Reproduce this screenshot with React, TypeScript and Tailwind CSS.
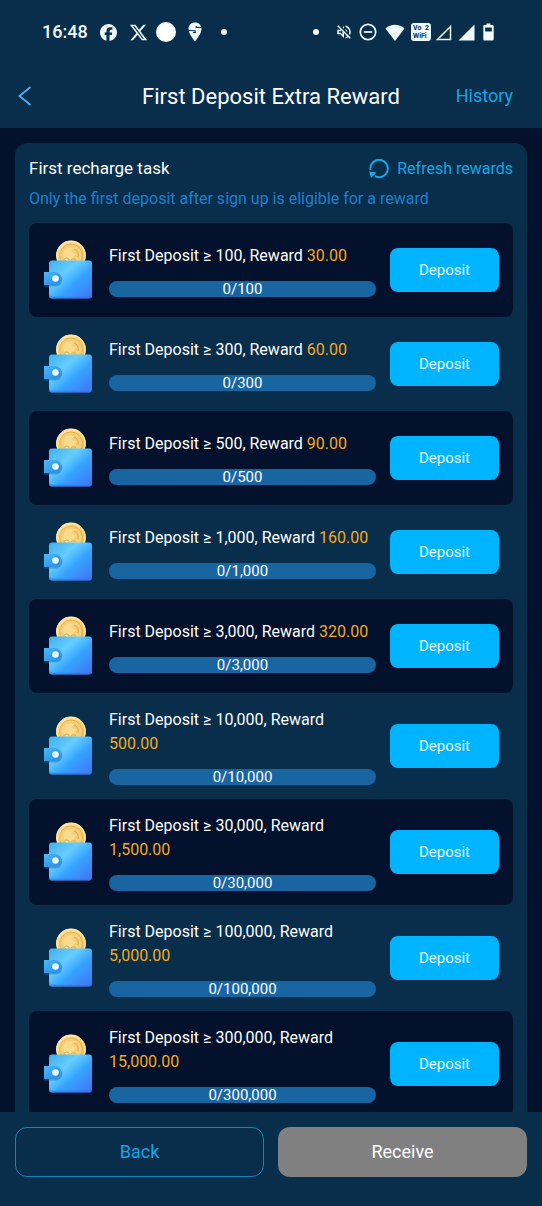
import { FaFacebook, FaXTwitter } from "react-icons/fa6";
import { MdOutlineVolumeOff } from "react-icons/md";

type Task = {
  target: string;
  reward: string;
};

const tasks: Task[] = [
  { target: "100", reward: "30.00" },
  { target: "300", reward: "60.00" },
  { target: "500", reward: "90.00" },
  { target: "1,000", reward: "160.00" },
  { target: "3,000", reward: "320.00" },
  { target: "10,000", reward: "500.00" },
  { target: "30,000", reward: "1,500.00" },
  { target: "100,000", reward: "5,000.00" },
  { target: "300,000", reward: "15,000.00" },
];

function WalletIcon() {
  return (
    <svg viewBox="0 0 50 60" className="h-[60px] w-[50px] shrink-0" aria-hidden="true">
      <defs>
        <linearGradient id="wallet" x1="0" y1="0" x2="1" y2="1">
          <stop offset="0" stopColor="#3fb0ee" />
          <stop offset="0.35" stopColor="#66cdff" />
          <stop offset="0.6" stopColor="#35a3ff" />
          <stop offset="1" stopColor="#4272f4" />
        </linearGradient>
        <linearGradient id="clasp" x1="0" y1="0" x2="1" y2="1">
          <stop offset="0" stopColor="#4db9fb" />
          <stop offset="1" stopColor="#2388dc" />
        </linearGradient>
        <linearGradient id="coin" x1="0" y1="0" x2="1" y2="1">
          <stop offset="0" stopColor="#ffe9a6" />
          <stop offset="1" stopColor="#f0b34a" />
        </linearGradient>
      </defs>
      <circle cx="28" cy="15.500" r="15" fill="url(#coin)" />
      <circle cx="28" cy="15.500" r="14" fill="none" stroke="#fbe6a8" strokeWidth="1.300" />
      <circle cx="28" cy="15.500" r="11.500" fill="#f5cf78" stroke="#e0a848" strokeWidth="0.800" />
      <path d="M20 14c1-5 6-8 11-6l-3 4 5 1-4 7-6 1z" fill="#fbdf96" opacity="0.7" />
      <path
        d="M20.500 20c2-3 5-2 6 0M28 20c2-2 4-1 5 0M31 9c3 1 5 4 4 8"
        fill="none"
        stroke="#d9a040"
        strokeWidth="0.900"
      />
      <rect x="6" y="20.500" width="43" height="38" rx="3" fill="url(#wallet)" />
      <path d="M6 55.500a3 3 0 0 0 3 3h37a3 3 0 0 0 3-3v-1a3 3 0 0 1-3 2H9a3 3 0 0 1-3-2z" fill="#2b74e8" opacity="0.5" />
      <path d="M1 33h11.500a6.500 6.500 0 0 1 0 13.500H1z" fill="#1c6fc4" opacity="0.5" />
      <path d="M1 32h11a6.500 6.500 0 0 1 0 13H1z" fill="url(#clasp)" />
      <circle cx="12.500" cy="38.500" r="3.300" fill="#e9fdff" />
    </svg>
  );
}

function RefreshIcon() {
  return (
    <svg viewBox="0 0 20 20" className="size-5" fill="none" aria-hidden="true">
      <path d="M1.500 11A8.700 8.700 0 1 1 6 17.200" stroke="currentColor" strokeWidth="2" />
      <path d="M0 12.500l7.500 1-5.500 5.500z" fill="currentColor" />
    </svg>
  );
}

function StatusBar() {
  return (
    <div className="flex h-16 items-center justify-between pr-12 pl-[42px] text-[#f0fbff]">
      <div className="flex items-center">
        <span className="text-lg font-medium">16:48</span>
        <FaFacebook className="ml-3 size-[17px]" />
        <FaXTwitter className="ml-3 size-[19px]" />
        <span className="ml-2 size-5 rounded-full bg-white" />
        <svg viewBox="0 0 14 20" className="ml-3 h-5 w-3.5">
          <path
            d="M7 0.500c3.800 0 6.500 2.700 6.500 6.300 0 4.400-3.600 8.700-6.500 12.700C4.100 15.500 0.500 11.200 0.500 6.800 0.500 3.200 3.200 0.500 7 0.500z"
            fill="currentColor"
          />
          <path d="M14 5.500H8.200v-1.500M0 8.500l7.200 0.300v1.700H5" fill="none" stroke="#082e4c" strokeWidth="1.100" />
        </svg>
        <span className="ml-[19px] size-1.5 rounded-full bg-white" />
      </div>
      <div className="flex items-center">
        <span className="mr-4 size-1.5 rounded-full bg-white" />
        <MdOutlineVolumeOff className="mr-1.5 size-[18px]" />
        <svg viewBox="0 0 18 18" className="mr-2 size-[18px]" fill="none" stroke="currentColor" strokeWidth="1.700">
          <circle cx="9" cy="9" r="7.700" />
          <path d="M4.800 9h8.400" />
        </svg>
        <svg viewBox="0 0 20 17" className="mr-1.5 h-[17px] w-5" fill="currentColor">
          <path d="M10 17L0.500 4.500C5.500-0.500 14.500-0.500 19.500 4.500z" />
        </svg>
        <span className="mr-1 flex h-[18px] w-5 flex-col rounded-[3px] bg-[#f0fbff] px-0.5 pt-px text-[7px] leading-2 font-bold text-[#082e4c]">
          <span className="flex justify-between">
            <span>Vo</span>
            <span>2</span>
          </span>
          <span>WiFi</span>
        </span>
        <svg viewBox="0 0 17 17" className="mr-1.5 size-[17px]" fill="none" stroke="currentColor" strokeWidth="1.500">
          <path d="M15.500 2.500v13h-13z" />
        </svg>
        <svg viewBox="0 0 17 17" className="mr-2 size-[17px]" fill="currentColor">
          <path d="M16.500 0.500v16h-16z" />
        </svg>
        <svg viewBox="0 0 11 18" className="h-[18px] w-[11px]">
          <path
            d="M3.500 0.500h4v1.500H9.500a1.200 1.200 0 0 1 1.200 1.200v13a1.200 1.200 0 0 1-1.200 1.200h-8a1.200 1.200 0 0 1-1.200-1.200v-13A1.200 1.200 0 0 1 1.500 2h2z"
            fill="currentColor"
          />
          <path d="M2.200 4.500h6.600v4H2.200z" fill="#082e4c" />
        </svg>
      </div>
    </div>
  );
}

function TaskRow({ task }: { task: Task }) {
  return (
    <li className="flex min-h-[94px] items-center rounded-lg px-3.5 py-3.5 odd:bg-[#03112c]">
      <WalletIcon />
      <div className="ml-4 min-w-0 flex-1 pt-px">
        <p className="text-base text-white">
          First Deposit ≥ {task.target}, Reward{" "}
          <span className="text-[#f5a91f]">{task.reward}</span>
        </p>
        <div
          role="progressbar"
          aria-label={`Deposit progress, target ${task.target}`}
          aria-valuenow={0}
          className="mt-[13px] h-4 rounded-full bg-[#1965a2] text-center text-[15px] leading-4 text-white"
        >
          0/{task.target}
        </div>
      </div>
      <button
        type="button"
        className="ml-3.5 h-11 w-[109px] shrink-0 rounded-lg bg-[#00b4ff] text-[15px] text-[#e6fbff]"
      >
        Deposit
      </button>
    </li>
  );
}

export default function App() {
  return (
    <div className="flex h-screen flex-col bg-[#03112c] font-[Roboto,sans-serif]">
      <header className="shrink-0 bg-[#082e4c]">
        <StatusBar />
        <div className="grid h-16 grid-cols-[1fr_auto_1fr] items-center px-[18px]">
          <button type="button" aria-label="Go back" className="justify-self-start text-[#4fa8ee]">
            <svg viewBox="0 0 14 20" className="h-5 w-3.5" fill="none" stroke="currentColor" strokeWidth="2">
              <path d="M12.500 1L1.500 10l11 9" />
            </svg>
          </button>
          <h1 className="text-[22px] text-white">First Deposit Extra Reward</h1>
          <a href="#history" className="mr-[11px] justify-self-end text-lg text-[#12a7e5]">
            History
          </a>
        </div>
      </header>

      <main className="min-h-0 flex-1 overflow-hidden px-[15px] pt-[15px]">
        <section className="rounded-xl bg-[#082e4c] px-3.5 pt-3.5 pb-4">
          <div className="flex h-6 items-center justify-between">
            <h2 className="text-[17px] text-white">First recharge task</h2>
            <button type="button" className="flex items-center gap-2 text-base text-[#12a7e5]">
              <RefreshIcon />
              Refresh rewards
            </button>
          </div>
          <p className="mt-1.5 mb-3 text-base text-[#1f80cd]">
            Only the first deposit after sign up is eligible for a reward
          </p>
          <ul>
            {tasks.map((task) => (
              <TaskRow key={task.target} task={task} />
            ))}
          </ul>
        </section>
      </main>

      <footer className="grid shrink-0 grid-cols-2 gap-3.5 bg-[#082e4c] px-[15px] pt-[15px] pb-[29px] text-lg">
        <button type="button" className="h-[50px] rounded-xl border border-[#1385b8] text-[#12a7e5]">
          Back
        </button>
        <button type="button" className="h-[50px] rounded-xl bg-[#808080] text-white">
          Receive
        </button>
      </footer>
    </div>
  );
}
